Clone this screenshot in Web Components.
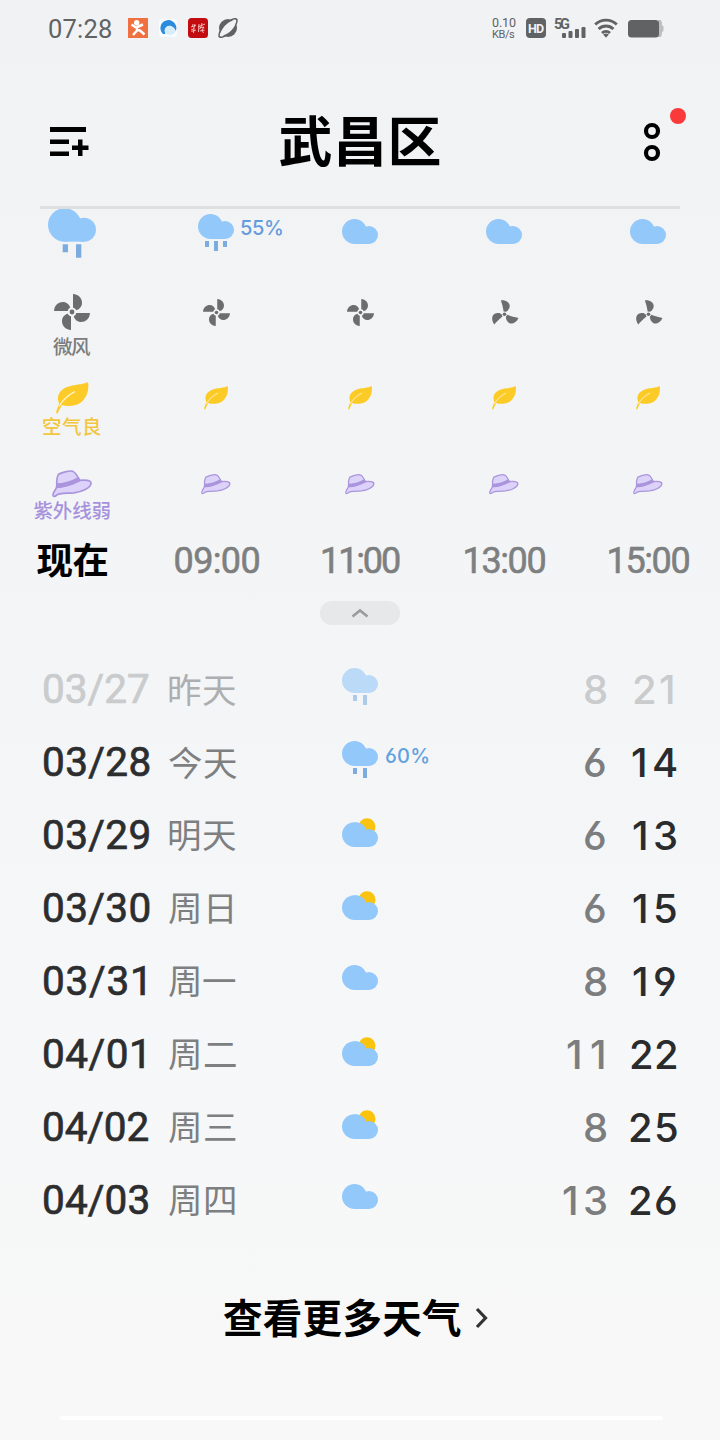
<!DOCTYPE html>
<html lang="zh-CN">
<head>
<meta charset="utf-8">
<title>武昌区</title>
<style>
html,body{margin:0;padding:0}
body{width:720px;height:1440px;overflow:hidden;background:linear-gradient(#f1f2f4 0,#f2f3f5 200px,#f4f5f7 700px,#f6f7f8 1000px,#f8f8f8 1440px);font-family:Roboto,"Noto Sans CJK SC",sans-serif}
</style>
</head>
<body>
<weather-page></weather-page>
<script>
const define = (name, css, html, ready) => {
  const t = document.createElement('template');
  t.innerHTML = `<style>${css}</style>${html}`;
  customElements.define(name, class extends HTMLElement {
    connectedCallback() {
      if (this.shadowRoot) return;
      this.attachShadow({mode: 'open'}).append(t.content.cloneNode(true));
      if (ready) ready(this, this.shadowRoot);
    }
  });
};

/* Text whose box is its ink: tracked to the width w, box height is the ink height. */
const pen = document.createElement('canvas').getContext('2d');
define('fit-text', ':host{display:block;flex:none;white-space:nowrap}span{display:block}', '<span></span>', (el, root) => {
  const s = root.querySelector('span'), text = el.getAttribute('text');
  const size = +el.getAttribute('size'), weight = el.getAttribute('weight') || 400;
  const fam = el.getAttribute('font') || 'Roboto';
  const family = `"${fam}","Noto Sans CJK SC",sans-serif`;
  pen.font = `${weight} ${size}px ${family}`;
  const m = pen.measureText(text);
  const v = /^[\d.:/%]+$/.test(text) ? pen.measureText('0') : m;
  const ink = m.actualBoundingBoxLeft + m.actualBoundingBoxRight;
  const w = +el.getAttribute('w') || ink;
  const h = v.actualBoundingBoxAscent + v.actualBoundingBoxDescent;
  const inkMid = (v.actualBoundingBoxAscent - v.actualBoundingBoxDescent) / 2;
  const boxMid = (m.fontBoundingBoxAscent - m.fontBoundingBoxDescent) / 2;
  el.style.cssText += `;width:${w}px;height:${h}px`;
  s.textContent = text;
  s.style.cssText = `font:${weight} ${size}px/${h}px ${family};font-feature-settings:"cv03","cv04";letter-spacing:${text.length > 1 ? (w - ink) / (text.length - 1) : 0}px;text-indent:${m.actualBoundingBoxLeft}px;transform:translateY(${Math.round(inkMid - boxMid)}px)`;
});

const cloud = '<g fill="#92c8fa"><circle cx="12.5" cy="12.5" r="12.5"/><circle cx="27" cy="16" r="9"/><path d="M12 12H27V25H12Z"/></g>';
const blade4 = '<path d="M1-18C7-17.6 10-13.4 10-9 10-5.600 7.500-2.500 4.200-1.800 3.500-3.300 2.500-4 1-4.200Z"/>';
const rot = (p, list) => list.map(a => `<g transform="rotate(${a})">${p}</g>`).join('');
const leaf = '<path d="M32 0C33.500 8 30.500 16.500 24.500 20.800 19 24.500 11 24.800 5.800 22.900 4.500 25.500 3 28.500 1.300 32L0 30.500C1 27 2.300 24 3.200 21.500 0 15 3 8 11 5 18 2.400 27 2.800 32 0Z" fill="#fccb27"/><path d="M3.300 24C7 17.500 12 13 18.500 9.800" stroke="#fff3c4" stroke-width="1.300" fill="none" stroke-linecap="round"/>';
const hat = '<g stroke="#aa95dc" stroke-width="1.700" stroke-linejoin="round" fill="#ddd2fa"><path d="M4.800 15C4.600 11 5.100 7 6.300 4.500 9 2.500 17 .4 20.500 1.200 23.500 2 26.500 7.500 27.200 11Z"/><path d="M1.200 26C-.2 23 4 20 4.600 17.200 12 17 21 13.500 27.600 10.400 32 9.800 39.600 10 39 13.600 38.200 18 30 22 22 22.900 14 23.600 7 22.600 4 25.600 3.300 26.400 1.800 26.700 1.200 26Z"/><path d="M4.900 14.200C11 14.200 20 11.400 26.500 8L27.600 10.400C21 14 12 17 4.600 17.200Z" fill="#ab96df"/></g>';
const icons = {
  cloud: ['0 0 36 40', `<g transform="translate(0 6)">${cloud}</g>`],
  rain: ['0 0 36 40', `<g transform="translate(0 1)">${cloud}</g><path d="M11 28h4v6h-4zM21 28h4v10h-4z" fill="#7cacdf"/>`],
  rain3: ['0 0 36 40', `<g transform="translate(0 1)">${cloud}</g><path d="M7 28h4v6H7zM16 28h4v10h-4zM25 28h4v6h-4z" fill="#7cacdf"/>`],
  partly: ['0 0 36 40', `<circle cx="25" cy="13.800" r="8.500" fill="#fac30d"/><g fill="#92c8fa"><circle cx="12.400" cy="21.600" r="12.400"/><circle cx="27" cy="25" r="9"/><path d="M12 9.200C19 9.200 23 12.500 24.500 17L27 34H12Z"/></g>`],
  wind4: ['-18 -18 36 36', rot(blade4, [0, 90, 180, 270]) + '<circle r="2.400"/>'],
  wind3: ['-18 -18 36 36', '<g transform="translate(0 2.300) scale(1.333)">' + rot('<path d="M-3.700-14C1.500-14.600 5.200-11.700 5.200-8.300 5.200-5.700 3.200-3.300 1.500-2.500L-.9-2.800C-1.400-6.500-2.200-10-3.700-14Z"/>', [0, 120, 240]) + '<circle r="1.800"/></g>'],
  leaf: ['0 0 33 32', leaf],
  hat: ['0 0 40 27', hat],
};
define('weather-icon', ':host{display:block;flex:none;line-height:0}svg{display:block;overflow:visible;fill:#6c6d6e}', '<svg></svg>', (el, root) => {
  const [box, art] = icons[el.getAttribute('name')], svg = root.querySelector('svg');
  const [, , w, h] = box.split(' ').map(Number), k = +(el.getAttribute('scale') || 1);
  svg.setAttribute('viewBox', box);
  svg.setAttribute('width', w * k);
  svg.setAttribute('height', h * k);
  svg.innerHTML = art;
});

define('status-bar', `
:host{display:flex;height:57px;box-sizing:border-box;padding:18px 56px 19px 49px;color:#606264;align-items:center}
svg{display:block;flex:none}.grow{flex:1}.time{margin-right:17px}
.icons{display:flex;gap:10px}.speed{display:flex;flex-direction:column;gap:3px;margin-right:10px}
.hd{width:20px;height:20px;border-radius:4px;background:#606264;color:#f1f2f4;display:flex;align-items:center;justify-content:center;margin-right:8px}
.net{width:32px;height:20px;display:flex;flex-direction:column;position:relative;margin-right:8px}
.net svg{position:absolute;left:8px;top:9px}`, `
<fit-text class="time" text="07:28" size="25.500" w="62"></fit-text>
<div class="icons">
<svg width="20" height="20"><rect width="20" height="20" fill="#f0703f"/><circle cx="8.700" cy="4.700" r="2.700" fill="#fff"/><path d="M3.500 6.500L8 9.500 15 6.500M8.500 9L9.500 12 5 17M9.500 12L12 12.500 16.500 16.500" stroke="#fff" stroke-width="2.500" fill="none" stroke-linejoin="round"/></svg>
<svg width="20" height="20"><rect x="1" y="1" width="18" height="18" rx="4" fill="#f8fcff"/><path d="M4.500 15.500A8 8 0 1 1 17.800 13C16.500 9.500 12.500 6.500 9 8.500 6 10.500 6.500 13.500 7.500 15.800 6.500 16.300 5.300 16.200 4.500 15.500Z" fill="#2b8bdd"/><path d="M7.500 15.800C11 17.800 15.500 17.300 17.800 13.500 16.500 10 13 7.500 10 8 6.500 9.500 6 12.500 7.500 15.800Z" fill="#d9ecfa"/></svg>
<svg width="20" height="20"><rect width="20" height="20" rx="3.500" fill="#c30c10"/><path d="M5 6L4.500 9M3 9L8 7.500M7 6L5.500 11 3 12M6 10L5.500 15M3.500 13.500L8 12M11 6L10.500 14M10 9L17 6M14 5L13 9 11.500 11M12 10L16 9 14 12 15.500 15M12 13L16.500 12" stroke="#f7c9c6" stroke-width=".9" fill="none"/></svg>
<svg width="20" height="20"><circle cx="10" cy="10" r="9" fill="#606264"/><path d="M18.500 1.500C20.500 4 15.500 12 9.500 16.500 5 19.800 1.500 20 1 18" fill="none" stroke="#606264" stroke-width="1.500"/><ellipse cx="10" cy="10" rx="9.500" ry="4" transform="rotate(-43 10 10)" fill="#f1f2f4"/><path d="M1.500 18.500C-.5 16 4.500 8 10.500 3.500 15 .2 18.500 0 19 2" fill="none" stroke="#606264" stroke-width="1.500"/></svg>
</div>
<div class="grow"></div>
<div class="speed"><fit-text text="0.10" size="12.500" w="24"></fit-text><fit-text text="KB/s" size="11" w="23"></fit-text></div>
<div class="hd"><fit-text text="HD" size="12.500" weight="700" font="Roboto" w="16"></fit-text></div>
<div class="net"><fit-text text="5G" size="14.500" weight="700" w="16"></fit-text><svg width="24" height="11"><g fill="#606264"><rect y="6" width="4" height="5" rx="1"/><rect x="6.500" y="4" width="4" height="7" rx="1"/><rect x="13" y="2" width="4" height="9" rx="1"/><rect x="19.500" width="4" height="11" rx="1"/></g></svg></div>
<svg width="24" height="20" style="margin-right:10px"><g fill="none" stroke="#606264" stroke-width="2.900"><path d="M1.200 6.500A15.500 15.500 0 0 1 22.800 6.500"/><path d="M4.600 11A10.500 10.500 0 0 1 19.400 11"/><path d="M8 15A6 6 0 0 1 16 15"/></g><path d="M9.200 16.600Q12 14.600 14.800 16.600L12 19.800Z" fill="#606264"/></svg>
<svg width="36" height="20"><path d="M30 2H32Q34 2 34 7L35.500 8.500V13L34 14Q34 19 32 19H30Z" fill="#bcbec0"/><rect y="2" width="31" height="17.500" rx="3.500" fill="#606264"/></svg>`);

define('title-bar', `
:host{display:flex;justify-content:space-between;height:152px;box-sizing:border-box;margin:0 40px;padding:0 10px;border-bottom:3px solid #dddfe0;color:#000}
svg{display:block;overflow:visible}.l{margin-top:70px}.t{margin:58px 4px 0 0}.r{margin-top:51px}`, `
<svg class="l" width="39" height="30"><path d="M0 0H36V5H0zM0 12.500H19V17H0zM0 24.500H19V29H0zM22 18.500H38.500V23H22zM28 12.500H32.500V29H28z"/></svg>
<fit-text class="t" text="武昌区" size="54" weight="700" w="160"></fit-text>
<svg class="r" width="36" height="60"><g fill="none" stroke="#000" stroke-width="4.200"><circle cx="18" cy="23" r="6"/><circle cx="18" cy="45" r="6"/></g><circle cx="44" cy="8" r="8" fill="#fa3a3a"/></svg>`);

define('hour-column', `
:host{display:grid;width:144px;grid-template-rows:81px 88px 88px 72px 42px;justify-items:center;color:#7d7f80}
.c{display:flex;flex-direction:column;align-items:center}
.w{position:relative;padding-top:4px}.big .w{padding-top:0;margin-top:-2px}
.pc{position:absolute;left:43px;top:11px;color:#649bdc}
.i{display:flex;align-items:center;justify-content:center}
.wind .i{height:36px;margin-top:4px}.air .i{height:32px;margin-top:4px}.uv .i{height:27px;margin-top:4px}
fit-text.lab{margin-top:7px}.air .lab{margin-top:3px}.uv .lab{margin-top:4px}
.time{align-self:start}`, '', (el, root) => {
  const now = el.hasAttribute('now'), a = n => el.getAttribute(n);
  const lab = (t, w, c) => now ? `<fit-text class="lab" style="color:${c}" text="${t}" size="19.500" weight="500" w="${w}"></fit-text>` : '';
  const row = (cls, icon, k, l) => `<div class="c ${cls}"><div class="i"><weather-icon name="${icon}" scale="${now ? 1 : k}"></weather-icon></div>${l}</div>`;
  root.innerHTML += `
<div class="${now ? 'big' : ''}"><div class="w"><weather-icon name="${a('sky')}" scale="${now ? 1.333 : 1}"></weather-icon>${a('chance') ? `<fit-text class="pc" font="Inter" text="${a('chance')}" size="20" weight="500" w="41"></fit-text>` : ''}</div></div>
${row('wind', a('wind'), .75, lab('微风', 38, '#7a7c7d'))}
${row('air', 'leaf', .74, lab('空气良', 58, '#f3c63f'))}
${row('uv', 'hat', .74, lab('紫外线弱', 77, '#a692dc'))}
<fit-text class="time" text="${a('time')}" style="${now ? 'color:#000;margin-top:4px' : 'margin-top:9px;margin-left:3px;-webkit-text-stroke:.6px'}" size="${now ? 36.5 : 36}" weight="${now ? 700 : 400}" w="${a('w')}"></fit-text>`;
});

define('day-row', `
:host{display:grid;grid-template-columns:125px 173px 180px 84px 71px;height:73px;align-items:center;padding-left:44px}
.d{color:#2c2d2f;-webkit-text-stroke:.7px}.n{color:#7d7f80}.s{position:relative;margin-top:-4px}
.s fit-text{position:absolute;left:44px;top:8px;color:#62a2e0}
.lo,.hi{justify-self:end;margin-top:2px}.lo{color:#7c7d7e}.hi{color:#2a2b2d}.n{margin-top:3px}
:host([past]) .d,:host([past]) .lo,:host([past]) .hi{color:#c9cbcc}:host([past]) .n{color:#acaeaf}:host([past]) weather-icon{opacity:.58}`, '', (el, root) => {
  const [date, dw, name, nw, sky, lo, lw, hi, hw, hr, pct] = el.getAttribute('data').split('|');
  root.innerHTML += `
<fit-text class="d" text="${date}" size="40.500" weight="400" w="${dw - 2}"></fit-text>
<fit-text class="n" text="${name}" size="34.500" weight="400" w="${nw}"></fit-text>
<div class="s"><weather-icon name="${sky}"></weather-icon>${pct ? `<fit-text font="Inter" text="${pct}" size="20" weight="500" w="43"></fit-text>` : ''}</div>
<fit-text class="lo" style="margin-right:${lo === '11' ? 2 : 0}px" font="Inter" text="${lo}" size="40" weight="500" w="${lw}"></fit-text>
<fit-text class="hi" style="margin-right:${hr}px" font="Inter" text="${hi}" size="40" weight="500" w="${hw}"></fit-text>`;
});

define('weather-page', `
:host{display:block;width:720px;height:1440px;overflow:hidden}
.hours{display:flex;height:392px;overflow:hidden}
.fold{width:80px;height:24px;border-radius:12px;background:#e7e8e9;margin:0 auto;display:flex;align-items:center;justify-content:center}
.days{padding-top:27px}
.more{display:flex;align-items:center;gap:14px;margin:63px 0 0 223px;height:38px;color:#000}
.bar{height:4px;margin:79px 57px 0 60px;background:#fff;border-radius:6px 6px 2px 2px}`, `
<status-bar></status-bar>
<title-bar></title-bar>
<div class="hours">
<hour-column now sky="rain" wind="wind4" time="现在" w="71"></hour-column>
<hour-column sky="rain3" wind="wind4" time="09:00" w="84" chance="55%"></hour-column>
<hour-column sky="cloud" wind="wind4" time="11:00" w="77"></hour-column>
<hour-column sky="cloud" wind="wind3" time="13:00" w="80"></hour-column>
<hour-column sky="cloud" wind="wind3" time="15:00" w="80"></hour-column>
</div>
<div class="fold"><svg width="18" height="10"><path d="M1.500 8.500L9 2.500 16.500 8.500" fill="none" stroke="#999b9c" stroke-width="2.600"/></svg></div>
<div class="days">
<day-row past data="03/27|106|昨天|67|rain|8|21|21|39|4"></day-row>
<day-row data="03/28|107.5|今天|68|rain|6|21|14|45|0|60%"></day-row>
<day-row data="03/29|107.5|明天|67|partly|6|21|13|43|1"></day-row>
<day-row data="03/30|107.5|周日|63|partly|6|21|15|43|1"></day-row>
<day-row data="03/31|103|周一|67|cloud|8|21|19|43|1"></day-row>
<day-row data="04/01|102|周二|67|partly|11|37|22|46|0"></day-row>
<day-row data="04/02|106.5|周三|67|partly|8|21|25|47|0"></day-row>
<day-row data="04/03|106.5|周四|66|cloud|13|43|26|47|0"></day-row>
</div>
<div class="more"><fit-text text="查看更多天气" size="39.500" weight="700" w="238"></fit-text><svg width="14" height="22"><path d="M2 2L10.500 11 2 20" fill="none" stroke="#333" stroke-width="3.200"/></svg></div>
<div class="bar"></div>`);
</script>
</body>
</html>
